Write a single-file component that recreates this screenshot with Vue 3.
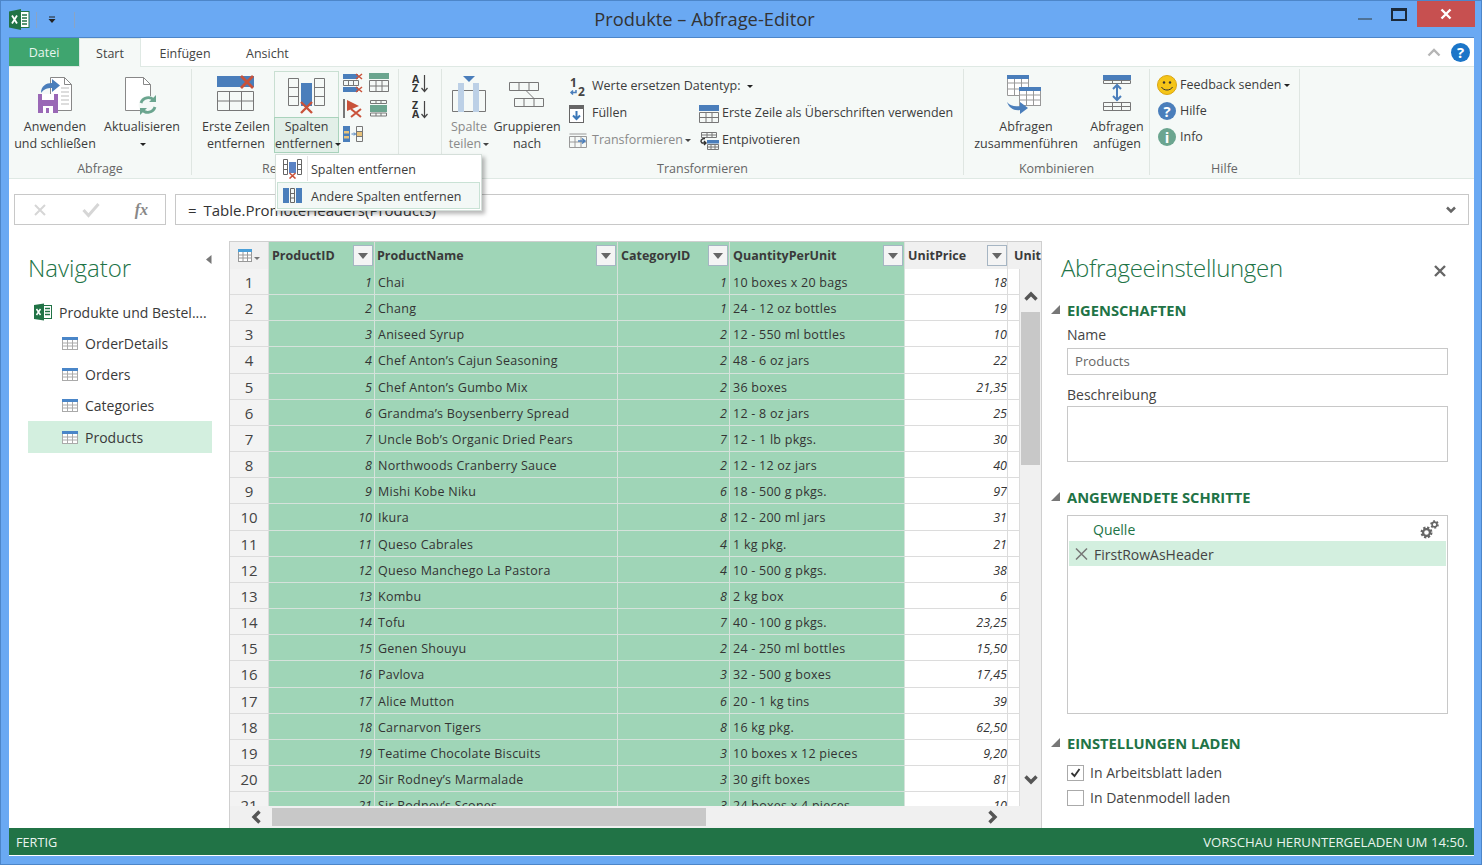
<script setup>
// column layout of the preview grid
const columns = [
  { name: 'ProductID', key: 'id', cls: 'num sel' },
  { name: 'ProductName', key: 'name', cls: 'sel' },
  { name: 'CategoryID', key: 'cat', cls: 'num sel' },
  { name: 'QuantityPerUnit', key: 'qty', cls: 'sel' },
  { name: 'UnitPrice', key: 'price', cls: 'num' },
]

const raw = [
  ['Chai', 1, '10 boxes x 20 bags', '18'],
  ['Chang', 1, '24 - 12 oz bottles', '19'],
  ['Aniseed Syrup', 2, '12 - 550 ml bottles', '10'],
  ['Chef Anton’s Cajun Seasoning', 2, '48 - 6 oz jars', '22'],
  ['Chef Anton’s Gumbo Mix', 2, '36 boxes', '21,35'],
  ['Grandma’s Boysenberry Spread', 2, '12 - 8 oz jars', '25'],
  ['Uncle Bob’s Organic Dried Pears', 7, '12 - 1 lb pkgs.', '30'],
  ['Northwoods Cranberry Sauce', 2, '12 - 12 oz jars', '40'],
  ['Mishi Kobe Niku', 6, '18 - 500 g pkgs.', '97'],
  ['Ikura', 8, '12 - 200 ml jars', '31'],
  ['Queso Cabrales', 4, '1 kg pkg.', '21'],
  ['Queso Manchego La Pastora', 4, '10 - 500 g pkgs.', '38'],
  ['Kombu', 8, '2 kg box', '6'],
  ['Tofu', 7, '40 - 100 g pkgs.', '23,25'],
  ['Genen Shouyu', 2, '24 - 250 ml bottles', '15,50'],
  ['Pavlova', 3, '32 - 500 g boxes', '17,45'],
  ['Alice Mutton', 6, '20 - 1 kg tins', '39'],
  ['Carnarvon Tigers', 8, '16 kg pkg.', '62,50'],
  ['Teatime Chocolate Biscuits', 3, '10 boxes x 12 pieces', '9,20'],
  ['Sir Rodney’s Marmalade', 3, '30 gift boxes', '81'],
  ['Sir Rodney’s Scones', 3, '24 boxes x 4 pieces', '10'],
]
const rows = raw.map((r, i) => ({ id: i + 1, name: r[0], cat: r[1], qty: r[2], price: r[3] }))

const tables = ['OrderDetails', 'Orders', 'Categories', 'Products']
</script>

<template>
  <div class="window">
    <header class="titlebar">
      <div class="qat">
        <svg width="21" height="21" viewBox="0 0 21 21">
          <rect x="10" y="2.5" width="10" height="16" fill="#fff" stroke="#217346" />
          <path d="M13 6h5M13 9h5M13 12h5M13 15h5" stroke="#217346" stroke-width="1.6" />
          <path d="M0 2.500 12 0v21L0 18.500z" fill="#217346" />
          <path d="M3 6.500l5 8M8 6.500l-5 8" stroke="#fff" stroke-width="1.8" />
        </svg>
        <i class="qat-sep"></i>
        <svg class="qat-drop" width="8" height="8" viewBox="0 0 8 8"><path d="M1 1h6" stroke="#222" /><path d="M0.500 3h7L4 7z" fill="#222" /></svg>
        <i class="qat-sep"></i>
      </div>
      <div class="title">Produkte – Abfrage-Editor</div>
      <div class="winbtns">
        <i class="win-min"></i>
        <i class="win-max"></i>
        <div class="win-close">
          <svg width="12" height="12" viewBox="0 0 12 12"><path d="M1.500 1.500l9 9M10.500 1.500l-9 9" stroke="#fff" stroke-width="2.400" /></svg>
        </div>
      </div>
    </header>

    <div class="inner">
      <nav class="tabs">
        <div class="tab file">Datei</div>
        <div class="tab active">Start</div>
        <div class="tab einf">Einfügen</div>
        <div class="tab">Ansicht</div>
        <div class="tabs-right">
          <svg width="14" height="9" viewBox="0 0 14 9"><path d="M1.500 7.500 7 2l5.500 5.500" fill="none" stroke="#b5b5b5" stroke-width="2.400" /></svg>
          <svg width="19" height="19" viewBox="0 0 19 19"><circle cx="9.500" cy="9.500" r="9.500" fill="#1b75c8" /><text x="9.500" y="15" text-anchor="middle" class="glyph" font-size="15" fill="#fff">?</text></svg>
        </div>
      </nav>

      <section class="ribbon">
        <!-- Abfrage -->
        <div class="group g1">
          <div class="group-body">
            <div class="big w82">
              <svg class="big-icon" width="36" height="40" viewBox="0 0 36 40">
                <path d="M13.500 3.500h14l7 7v26h-21z" fill="#fff" stroke="#888" />
                <path d="M27.500 3.500v7h7" fill="none" stroke="#888" />
                <path d="M24 14h8M24 18h8M24 22h8M24 26h8M24 30h8" stroke="#bbb" />
                <path d="M4 19c0-7 5-10 11-10V5l8 6.500-8 6.500v-4c-5 0-8 1-11 5z" fill="#4a7ebb" />
                <rect x="1" y="20" width="20" height="19" fill="#9a68b6" />
                <rect x="5" y="20" width="12" height="6" fill="#fff" />
                <rect x="6" y="32" width="10" height="7" fill="#fff" />
                <rect x="9" y="34" width="3" height="5" fill="#9a68b6" />
              </svg>
              <div>Anwenden<br />und schließen</div>
            </div>
            <div class="big w84">
              <svg class="big-icon" width="36" height="40" viewBox="0 0 36 40">
                <path d="M1.500 3.500h18l7 7v26h-25z" fill="#fff" stroke="#888" />
                <path d="M19.500 3.500v7h7" fill="none" stroke="#888" />
                <circle cx="24" cy="31" r="9.500" fill="#f5f9f7" />
                <path d="M17 29a7.500 7.500 0 0 1 13-2.500M31 33a7.500 7.500 0 0 1-13 2.500" fill="none" stroke="#6ba58f" stroke-width="2.800" />
                <path d="M32 21v7h-7zM16 41v-7h7z" fill="#6ba58f" />
              </svg>
              <div>Aktualisieren<br /><i class="caret"></i></div>
            </div>
          </div>
          <div class="group-label">Abfrage</div>
        </div>

        <!-- Reduzieren -->
        <div class="group g2">
          <div class="group-body">
            <div class="big w76">
              <svg class="big-icon" width="38" height="40" viewBox="0 0 38 40">
                <rect x="0" y="2" width="37" height="11" fill="#4a7ebb" />
                <path d="M.5 17.500h36v19H.5zM12.500 17.500v19M24.500 17.500v19M.5 27h36" fill="none" stroke="#777" />
                <path d="M24 2l12 12M36 2 24 14" stroke="#c9523a" stroke-width="2.800" />
              </svg>
              <div>Erste Zeilen<br />entfernen</div>
            </div>
            <div class="split">
              <div class="split-top">
                <svg width="38" height="37" viewBox="0 0 38 37">
                  <path d="M.5 1.500h10v27H.5zM.5 10.500h10M.5 19.500h10M26.500 1.500h10v27h-10zM26.500 10.500h10M26.500 19.500h10" fill="none" stroke="#777" />
                  <rect x="13" y="6" width="11" height="23" fill="#4a7ebb" />
                  <path d="M13 25l11 11M24 25 13 36" stroke="#c9523a" stroke-width="2.400" />
                </svg>
              </div>
              <div class="split-bottom">Spalten<br />entfernen<i class="caret"></i></div>

              <div class="menu">
                <div class="menu-item">
                  <span class="menu-ico">
                    <svg width="19" height="20" viewBox="0 0 19 20">
                      <path d="M.5.500h4v15h-4zM.5 5.500h4M.5 10.500h4M14.500.500h4v15h-4zM14.500 5.500h4M14.500 10.500h4" fill="none" stroke="#666" />
                      <rect x="6" y="3" width="7" height="11" fill="#5b83c4" />
                      <path d="M6.500 14l6 5.500M12.500 14l-6 5.500" stroke="#c9523a" stroke-width="1.600" />
                    </svg>
                  </span>
                  <span class="menu-text">Spalten entfernen</span>
                </div>
                <div class="menu-item hover">
                  <span class="menu-ico">
                    <svg width="19" height="16" viewBox="0 0 19 16">
                      <rect x="0" y="0" width="6" height="15" fill="#4a7ebb" />
                      <rect x="13" y="0" width="6" height="15" fill="#4a7ebb" />
                      <path d="M7.500.500h4v14h-4zM7.500 5.500h4M7.500 10h4" fill="none" stroke="#666" />
                    </svg>
                  </span>
                  <span class="menu-text">Andere Spalten entfernen</span>
                </div>
              </div>
            </div>
            <div class="small-icons">
              <svg width="20" height="20" viewBox="0 0 20 20">
                <rect x="0" y="1" width="15" height="5" fill="#4a7ebb" />
                <path d="M.5 7.500h15v5H.5zM5.500 7.500v5M10.500 7.500v5" fill="none" stroke="#777" />
                <rect x="0" y="14" width="15" height="5" fill="#4a7ebb" />
                <path d="M13 1l6 5M19 1l-6 5M13 14l6 5M19 14l-6 5" stroke="#c9523a" stroke-width="1.500" />
              </svg>
              <svg width="21" height="20" viewBox="0 0 21 20">
                <rect x="0" y="0" width="20" height="6" fill="#6ba58f" />
                <path d="M.5 7.500h19v11H.5zM7 7.500v11M13 7.500v11M.5 13h19" fill="none" stroke="#777" />
              </svg>
              <svg width="20" height="20" viewBox="0 0 20 20">
                <path d="M1 0v19" stroke="#777" stroke-width="2" />
                <path d="M4 1l12 6-12 5z" fill="#c9523a" />
                <path d="M8 10l10 8M18 10 8 18" stroke="#c9523a" stroke-width="2" />
              </svg>
              <svg width="21" height="18" viewBox="0 0 21 18">
                <path d="M1.500 1.500h16v3h-16zM1.500 14h16v3h-16zM7 1.500v3M12 1.500v3M7 14v3M12 14v3" fill="none" stroke="#777" />
                <rect x="1" y="6" width="17" height="7" fill="#6ba58f" />
              </svg>
              <svg width="20" height="18" viewBox="0 0 20 18">
                <rect x="0" y="1" width="7" height="16" fill="#4a7ebb" />
                <rect x="1" y="6" width="5" height="2.500" fill="#e8c27a" />
                <rect x="1" y="11" width="5" height="2.500" fill="#e8c27a" />
                <path d="M13.500 1.500h6v15h-6zM13.500 6.500h6M13.500 11.500h6" fill="none" stroke="#777" />
                <rect x="14" y="7" width="5" height="4" fill="#e8c27a" />
                <path d="M8.500 9h4M11 7.500 12.500 9 11 10.500" fill="none" stroke="#4a7ebb" />
              </svg>
            </div>
          </div>
          <div class="group-label">Reduzieren</div>
        </div>

        <!-- Sortieren -->
        <div class="group g3">
          <div class="sort">
            <svg width="16" height="19" viewBox="0 0 16 19">
              <text x="0" y="8.500" class="glyph" font-size="10.500" fill="#333">A</text>
              <text x="0" y="18" class="glyph" font-size="10.500" fill="#333">Z</text>
              <path d="M12.500 1v16M9.500 14l3 3.500 3-3.500" fill="none" stroke="#444" stroke-width="1.200" />
            </svg>
            <svg width="16" height="19" viewBox="0 0 16 19">
              <text x="0" y="8.500" class="glyph" font-size="10.500" fill="#333">Z</text>
              <text x="0" y="18" class="glyph" font-size="10.500" fill="#333">A</text>
              <path d="M12.500 1v16M9.500 14l3 3.500 3-3.500" fill="none" stroke="#444" stroke-width="1.200" />
            </svg>
          </div>
        </div>

        <!-- Transformieren -->
        <div class="group g4">
          <div class="group-body">
            <div class="big w38 off">
              <svg class="big-icon" width="38" height="40" viewBox="0 0 38 40">
                <path d="M2.500 16.500h33v21h-33z" fill="none" stroke="#777" />
                <rect x="8" y="9" width="6" height="29" fill="#bcd0e6" />
                <rect x="23" y="9" width="6" height="29" fill="#bcd0e6" />
                <path d="M13 2h12l-6 6z" fill="#4a7ebb" />
              </svg>
              <div>Spalte<br />teilen<i class="caret"></i></div>
            </div>
            <div class="big w66">
              <svg class="big-icon" width="36" height="40" viewBox="0 0 36 40">
                <path d="M.5 8.500h29v8H.5zM10 8.500v8M20 8.500v8M5.500 24.500h29v8h-29zM15 24.500v8M25 24.500v8M17 16.500l8 8" fill="none" stroke="#777" />
              </svg>
              <div>Gruppieren<br />nach</div>
            </div>
            <div class="cmd-grid">
              <div class="cmd span2">
                <svg class="ico-12" width="18" height="20" viewBox="0 0 18 20">
                  <text x="1" y="10" class="glyph" font-size="12" fill="#444">1</text>
                  <text x="9" y="19" class="glyph" font-size="12" fill="#444">2</text>
                  <path d="M7 13v2.500H2M4 13.500l-2 2 2 2" fill="none" stroke="#4a7ebb" stroke-width="1.500" />
                </svg>
                Werte ersetzen Datentyp:<i class="caret after"></i>
              </div>
              <div class="cmd">
                <svg width="18" height="18" viewBox="0 0 18 18">
                  <rect x=".5" y=".5" width="14" height="17" fill="#fff" stroke="#666" />
                  <rect x="0" y="0" width="15" height="4" fill="#666" />
                  <path d="M7.500 6v8M4 10.500l3.500 3.500 3.500-3.500" fill="none" stroke="#3c78b8" stroke-width="2" />
                </svg>
                Füllen
              </div>
              <div class="cmd">
                <svg width="20" height="18" viewBox="0 0 20 18">
                  <rect x="0" y="0" width="20" height="6" fill="#4a7ebb" />
                  <path d="M.5 7.500h19v10H.5zM7 7.500v10M13 7.500v10M.5 12.500h19" fill="none" stroke="#777" />
                </svg>
                Erste Zeile als Überschriften verwenden
              </div>
              <div class="cmd off">
                <svg width="18" height="16" viewBox="0 0 18 16">
                  <path d="M.5 3.500h17v11H.5zM6 3.500v11M12 3.500v11M.5 9h17" fill="none" stroke="#999" />
                  <path d="M.5 1h17" stroke="#999" />
                  <path d="M9 8h6M13 5.500 16 8l-3 2.500" fill="none" stroke="#4a7ebb" stroke-width="1.500" />
                </svg>
                Transformieren<i class="caret"></i>
              </div>
              <div class="cmd">
                <svg width="20" height="18" viewBox="0 0 20 18">
                  <path d="M2.500 .500h15v5h-15zM2.500 3h15M8 .500v5M13 .500v5" fill="none" stroke="#777" />
                  <path d="M8.500 12.500h11v5h-11zM8.500 15h11M12 12.500v5M16 12.500v5" fill="none" stroke="#777" />
                  <rect x="8" y="8" width="12" height="3.500" fill="#4a7ebb" />
                  <path d="M6 6.500C2 6.500 1 9.500 3 11h4M5 9l2 2-2 2" fill="none" stroke="#333" stroke-width="1.400" />
                </svg>
                Entpivotieren
              </div>
            </div>
          </div>
          <div class="group-label">Transformieren</div>
        </div>

        <!-- Kombinieren -->
        <div class="group g5">
          <div class="group-body">
            <div class="big w102">
              <svg class="big-icon" width="40" height="40" viewBox="0 0 40 40">
                <path d="M1.500 2.500h21v19h-21zM8.500 2.500v19M15.500 2.500v19M1.500 9h21M1.500 15h21" fill="#fff" stroke="#999" />
                <rect x="1" y="1" width="22" height="4" fill="#4a7ebb" />
                <rect x="13.500" y="13.500" width="21" height="18" fill="#fff" stroke="#999" />
                <path d="M20.500 13.500v18M27.500 13.500v18M13.500 21h21M13.500 26h21" stroke="#999" />
                <rect x="13" y="13" width="22" height="4" fill="#4a7ebb" />
                <path d="M1 28c3 4 8 5 13 4v-4l8 6-8 6v-4c-6 1-11-2-13-8z" fill="#4a7ebb" />
              </svg>
              <div>Abfragen<br />zusammenführen</div>
            </div>
            <div class="big w54">
              <svg class="big-icon" width="28" height="40" viewBox="0 0 28 40">
                <rect x="0" y="1" width="28" height="5" fill="#4a7ebb" />
                <path d="M.5 6.500h27v3h-27zM9.500 6.500v3M18.500 6.500v3M.5 28.500h27v8h-27zM.5 32.500h27M9.500 28.500v8M18.500 28.500v8" fill="none" stroke="#777" />
                <path d="M14 12v13M10 15l4-4 4 4M10 22l4 4 4-4" fill="none" stroke="#4a7ebb" stroke-width="2" />
              </svg>
              <div>Abfragen<br />anfügen</div>
            </div>
          </div>
          <div class="group-label">Kombinieren</div>
        </div>

        <!-- Hilfe -->
        <div class="group g6">
          <div class="group-body">
            <div class="help-list">
              <div class="cmd">
                <svg width="20" height="20" viewBox="0 0 20 20">
                  <circle cx="10" cy="10" r="9.500" fill="#f5c518" stroke="#d9a514" />
                  <circle cx="7" cy="7.500" r="1.200" fill="#333" />
                  <circle cx="13" cy="7.500" r="1.200" fill="#333" />
                  <path d="M4.500 12c2 4 9 4 11 0" fill="none" stroke="#333" />
                </svg>
                Feedback senden<i class="caret"></i>
              </div>
              <div class="cmd">
                <svg width="20" height="20" viewBox="0 0 20 20"><circle cx="10" cy="10" r="9" fill="#4a7ebb" /><text x="10" y="15.500" text-anchor="middle" class="glyph" font-size="15" fill="#fff">?</text></svg>
                Hilfe
              </div>
              <div class="cmd">
                <svg width="20" height="20" viewBox="0 0 20 20"><circle cx="10" cy="10" r="9" fill="#6ba58f" /><text x="10" y="15.500" text-anchor="middle" class="glyph" font-size="15" fill="#fff">i</text></svg>
                Info
              </div>
            </div>
          </div>
          <div class="group-label">Hilfe</div>
        </div>
      </section>

      <div class="formula-row">
        <div class="formula-btns">
          <svg width="14" height="14" viewBox="0 0 14 14"><path d="M2 2l10 10M12 2 2 12" stroke="#d6d6d6" stroke-width="2" /></svg>
          <svg width="18" height="16" viewBox="0 0 18 16"><path d="M1.500 8l5 5.500L16.500 2" fill="none" stroke="#d6d6d6" stroke-width="3" /></svg>
          <span class="fx">fx</span>
        </div>
        <div class="formula-input">
          <span><span class="eq">=</span> Table.PromoteHeaders(Products)</span>
          <svg width="10" height="8" viewBox="0 0 10 8"><path d="M1 1.500 5 5.500l4-4" fill="none" stroke="#666" stroke-width="2.500" /></svg>
        </div>
      </div>

      <main class="content">
        <aside class="navigator">
          <div class="nav-head">
            <h2 class="pane-title">Navigator</h2>
            <svg width="6" height="9" viewBox="0 0 6 9"><path d="M5.500 0v9L0 4.500z" fill="#777" /></svg>
          </div>
          <div class="nav-source">
            <svg width="18" height="18" viewBox="0 0 18 18">
              <rect x="9" y="2.500" width="8.500" height="13" fill="#fff" stroke="#217346" />
              <path d="M11 5.500h5M11 8.500h5M11 11.500h5" stroke="#217346" stroke-width="1.400" />
              <path d="M0 2 10 .5v17L0 16z" fill="#217346" />
              <path d="M2.500 6l4 6M6.500 6l-4 6" stroke="#fff" stroke-width="1.500" />
            </svg>
            Produkte und Bestel....
          </div>
          <ul class="nav-list">
            <li v-for="t in tables" :key="t" :class="{ current: t === 'Products' }">
              <svg width="16" height="13" viewBox="0 0 16 13">
                <rect x=".5" y=".5" width="15" height="12" fill="#fff" stroke="#aaa" />
                <path d="M5.500 3v9M10.500 3v9M1 6h14M1 9h14" stroke="#aaa" />
                <rect x="0" y="0" width="16" height="3" fill="#4a86c8" />
              </svg>
              {{ t }}
            </li>
          </ul>
        </aside>

        <section class="grid">
          <div class="grid-head">
            <div class="corner">
              <svg width="23" height="13" viewBox="0 0 23 13">
                <rect x=".5" y=".5" width="13" height="12" fill="#fff" stroke="#999" />
                <path d="M5 3v9M9.500 3v9M1 6h12M1 9h12" stroke="#999" />
                <rect x="0" y="0" width="14" height="3" fill="#4a9fd8" />
                <path d="M16 8h6l-3 3z" fill="#777" />
              </svg>
            </div>
            <div v-for="c in columns" :key="c.key" class="head-cell" :class="['c-' + c.key, c.cls]">
              <span>{{ c.name }}</span>
              <button class="filter"><i></i></button>
            </div>
            <div class="head-cell c-unit"><span>Unit</span></div>
          </div>
          <div class="grid-body">
            <div class="grid-rows">
              <div v-for="r in rows" :key="r.id" class="row">
                <div class="rownum">{{ r.id }}</div>
                <div v-for="c in columns" :key="c.key" class="cell" :class="['c-' + c.key, c.cls]">{{ r[c.key] }}</div>
                <div class="cell c-rest"></div>
              </div>
            </div>
            <div class="vscroll">
              <svg width="14" height="10" viewBox="0 0 14 10"><path d="M1.500 8.500 7 3l5.500 5.500" fill="none" stroke="#555" stroke-width="3.400" /></svg>
              <div class="vthumb"></div>
              <svg width="14" height="10" viewBox="0 0 14 10"><path d="M1.500 1.500 7 7l5.500-5.500" fill="none" stroke="#555" stroke-width="3.400" /></svg>
            </div>
          </div>
          <div class="hscroll">
            <svg width="10" height="14" viewBox="0 0 10 14"><path d="M8.500 1.500 3 7l5.500 5.500" fill="none" stroke="#555" stroke-width="3.400" /></svg>
            <div class="hthumb"></div>
            <svg width="10" height="14" viewBox="0 0 10 14"><path d="M1.500 1.500 7 7l-5.500 5.500" fill="none" stroke="#555" stroke-width="3.400" /></svg>
          </div>
        </section>

        <aside class="settings">
          <div class="settings-head">
            <h2 class="pane-title">Abfrageeinstellungen</h2>
            <svg width="12" height="12" viewBox="0 0 12 12"><path d="M1 1l10 10M11 1 1 11" stroke="#666" stroke-width="2.400" /></svg>
          </div>

          <h3 class="sec sec-props"><i class="tri"></i>EIGENSCHAFTEN</h3>
          <label class="lbl">Name</label>
          <div class="field">Products</div>
          <label class="lbl lbl-desc">Beschreibung</label>
          <div class="field area"></div>

          <h3 class="sec sec-steps"><i class="tri"></i>ANGEWENDETE SCHRITTE</h3>
          <div class="steps">
            <div class="step first">
              <span>Quelle</span>
              <svg width="19" height="19" viewBox="0 0 19 19">
                <circle cx="6.500" cy="12.500" r="4.800" fill="none" stroke="#666" stroke-width="2.400" stroke-dasharray="2.200 1.570" />
                <circle cx="6.500" cy="12.500" r="3.400" fill="none" stroke="#666" stroke-width="2.200" />
                <circle cx="14.500" cy="4.500" r="3.400" fill="none" stroke="#666" stroke-width="1.800" stroke-dasharray="1.800 1.760" />
                <circle cx="14.500" cy="4.500" r="2.400" fill="none" stroke="#666" stroke-width="1.600" />
              </svg>
            </div>
            <div class="step current">
              <svg width="13" height="12" viewBox="0 0 13 12"><path d="M1 .5l11 11M12 .5l-11 11" stroke="#777" stroke-width="1.500" /></svg>
              <span>FirstRowAsHeader</span>
            </div>
          </div>

          <h3 class="sec sec-load"><i class="tri"></i>EINSTELLUNGEN LADEN</h3>
          <div class="check">
            <span class="box">
              <svg width="13" height="13" viewBox="0 0 13 13"><path d="M2.500 7l3 3 5-7" fill="none" stroke="#333" stroke-width="1.800" /></svg>
            </span>
            In Arbeitsblatt laden
          </div>
          <div class="check">
            <span class="box"></span>
            In Datenmodell laden
          </div>
        </aside>
      </main>

      <footer class="status">
        <span>FERTIG</span>
        <span class="status-right">VORSCHAU HERUNTERGELADEN UM 14:50.</span>
      </footer>
    </div>
  </div>
</template>

<style>
html, body { margin: 0; padding: 0; }
</style>

<style scoped>
.window {
  box-sizing: border-box;
  width: 1482px;
  height: 865px;
  background: #6aa9f3;
  border: 1px solid #4d86c9;
  padding: 0 7px 8px 8px;
  display: flex;
  flex-direction: column;
  font-family: "Open Sans", "Noto Sans", sans-serif;
  color: #3a3a3a;
  overflow: hidden;
}
.glyph { font-family: "Open Sans", sans-serif; font-weight: 700; }
i { display: block; font-style: normal; }

/* title bar */
.titlebar { height: 36px; flex: none; display: flex; align-items: flex-start; position: relative; }
.qat { display: flex; align-items: center; height: 21px; margin-top: 8px; }
.qat-sep { width: 1px; height: 16px; background: #8aa4c4; margin-left: 6px; }
.qat-drop { margin: 0 12px 0 11px; }
.title { position: absolute; left: 0; right: 74px; top: 5px; text-align: center; font-size: 18.3px; line-height: 26px; color: #333; }
.winbtns { margin-left: auto; display: flex; align-items: flex-start; }
.win-min { width: 14px; height: 2px; background: #4e7297; margin-top: 17px; margin-right: 19px; }
.win-max { width: 12px; height: 8px; border: 2px solid #1c2a3a; border-top-width: 3px; margin-top: 7px; margin-right: 10px; }
.win-close { width: 58px; height: 26px; background: #c75050; display: flex; align-items: center; justify-content: center; margin-right: -1px; }

.inner { flex: 1; min-height: 0; display: flex; flex-direction: column; background: #fff; border-top: 1px solid #4d86c9; border-bottom: 1px solid #fff; }

/* tabs */
.tabs { height: 28px; flex: none; display: flex; align-items: stretch; font-size: 12.5px; position: relative; border-bottom: 1px solid #dfe9e4; }
.tab { padding: 0 18px; line-height: 32px; color: #444; }
.tab.file { width: 70px; box-sizing: border-box; padding: 0; text-align: center; background: #3fa56f; color: #e8f5ee; line-height: 30px; }
.tab.active { width: 62px; box-sizing: border-box; padding: 0; text-align: center; background: #f5f9f7; border: 1px solid #dfe9e4; border-bottom: none; height: 29px; line-height: 30px; }
.tab.einf { width: 86px; box-sizing: border-box; padding: 0; text-align: center; margin-left: 1px; }
.tab:last-of-type { padding: 0; margin-left: 18px; }
.tabs-right { margin-left: auto; display: flex; align-items: center; gap: 10px; padding-right: 4px; }

/* ribbon */
.ribbon { height: 111px; flex: none; display: flex; background: #f5f9f7; border-bottom: 1px solid #dfe9e4; font-size: 12.5px; line-height: 16.5px; color: #3c3c3c; }
.group { box-sizing: border-box; display: flex; flex-direction: column; margin: 2px 0 3px; border-right: 1px solid #dfe6e2; position: relative; }
.g1 { width: 183px; }
.g2 { width: 207px; }
.g3 { width: 43px; }
.g4 { width: 522px; }
.g5 { width: 186px; }
.g6 { width: 150px; }
.group-body { flex: 1; display: flex; align-items: flex-start; padding-top: 2px; min-height: 0; }
.group-label { height: 14px; line-height: 15px; text-align: center; color: #666; flex: none; }
.g1 .group-body { padding-left: 5px; gap: 4px; }
.g2 .group-body { padding-left: 6px; }
.g4 .group-body { padding-left: 8px; gap: 6px; }
.g5 .group-body { padding-left: 11px; gap: 13px; }
.g6 .group-body { padding-left: 7px; }

.big { display: flex; flex-direction: column; align-items: center; text-align: center; white-space: nowrap; }
.big-icon { height: 40px; margin: 3px 0 5px; flex: none; overflow: visible; }
.w82 { width: 82px; }
.w84 { width: 84px; }
.w76 { width: 76px; }
.w38 { width: 38px; }
.w66 { width: 66px; }
.w102 { width: 102px; }
.w54 { width: 54px; }
.off { color: #8a8a8a; }

.caret { display: inline-block; width: 0; height: 0; border: 3px solid transparent; border-top: 3px solid #222; border-bottom: none; vertical-align: middle; margin-left: 2px; }
.caret.after { margin-left: 6px; }
.off .caret { border-top-color: #444; }

.split { position: relative; width: 65px; box-sizing: border-box; text-align: center; white-space: nowrap; }
.split-top { height: 46px; box-sizing: border-box; border: 1px solid #c9dfd2; border-bottom: none; display: flex; justify-content: center; padding-top: 5px; }
.split-bottom { height: 36px; box-sizing: border-box; border: 1px solid #a9d3bc; background: #e2efe8; padding-top: 1px; }

.menu { position: absolute; left: 1px; top: 83px; width: 207px; box-sizing: border-box; background: #fff; border: 1px solid #d5dfda; box-shadow: 3px 3px 4px rgba(0, 0, 0, .28); padding: 0 1px 1px; z-index: 5; text-align: left; }
.menu-item { display: flex; align-items: center; height: 27px; box-sizing: border-box; border: 1px solid transparent; }
.menu-item.hover { background: #f3f8f6; border-color: #c9e2d5; }
.menu-ico { width: 29px; height: 100%; border-right: 1px solid #e4e4e4; margin-right: 3px; display: flex; align-items: center; justify-content: center; flex: none; }
.menu-item.hover .menu-ico { border-right-color: transparent; }
.menu-text { padding-top: 3px; }

.small-icons { display: grid; grid-template-columns: 22px 22px; grid-auto-rows: 26px; column-gap: 4px; margin-left: 4px; padding-top: 2px; }
.sort { display: flex; flex-direction: column; align-items: center; gap: 7px; padding-top: 5px; }

.cmd-grid { display: grid; grid-template-columns: 130px auto; grid-auto-rows: 27px; margin-left: 3px; margin-top: 2px; white-space: nowrap; }
.cmd { display: flex; align-items: center; }
.cmd svg { margin-right: 4px; flex: none; }
.span2 { grid-column: span 2; }
.cmd-grid .cmd svg.ico-12 { margin-right: 5px; }
.cmd-grid .cmd:nth-child(2n + 2) svg { margin-right: 5px; }
.cmd-grid .cmd:nth-child(2n + 3) svg { margin-right: 3px; }
.help-list { display: grid; grid-auto-rows: 26px; margin-top: 1px; white-space: nowrap; }
.help-list .cmd svg { margin-right: 3px; }

/* formula bar */
.formula-row { flex: none; height: 62px; box-sizing: border-box; padding: 15px 5px 16px 5px; display: flex; gap: 9px; }
.formula-btns { box-sizing: border-box; width: 152px; border: 1px solid #c8c8c8; display: flex; align-items: center; justify-content: space-between; padding: 0 17px 0 18px; }
.fx { font-family: "Liberation Serif", serif; font-style: italic; font-weight: 700; font-size: 16px; color: #888; }
.formula-input { flex: 1; box-sizing: border-box; border: 1px solid #c8c8c8; display: flex; align-items: center; justify-content: space-between; padding: 1px 12px 0; font-size: 15px; color: #333; }
.eq { margin-right: 3px; }

/* body */
.content { flex: 1; min-height: 0; display: flex; }
.pane-title { margin: 0; font-weight: 300; font-size: 24px; line-height: 34px; color: #217346; white-space: nowrap; }
.settings .pane-title { letter-spacing: -.3px; }

.navigator { width: 220px; flex: none; box-sizing: border-box; padding: 10px 17px 0 19px; font-size: 14px; }
.nav-head { display: flex; align-items: flex-start; justify-content: space-between; }
.nav-head svg { margin-top: 4px; }
.nav-source { display: flex; align-items: center; gap: 7px; margin: 16px 0 0 6px; height: 22px; white-space: nowrap; color: #3a3a3a; }
.nav-list { list-style: none; margin: 4.500px 0 0; padding: 0; }
.nav-list li { display: flex; align-items: center; height: 31.3px; padding-left: 34px; gap: 7px; }
.nav-list li.current { background: #d3efdf; }

/* grid */
.grid { width: 813px; flex: none; box-sizing: border-box; border: 1px solid #cfcfcf; border-width: 1px 1px 0 1px; display: flex; flex-direction: column; font-size: 12.5px; color: #333; overflow: hidden; }
.grid-head { height: 27px; flex: none; display: flex; background: #f0f0f0; font-weight: 700; }
.corner { width: 39px; flex: none; display: flex; align-items: center; justify-content: center; box-sizing: border-box; border-right: 1px solid #dcdcdc; }
.head-cell { box-sizing: border-box; flex: none; display: flex; align-items: center; justify-content: space-between; padding: 0 1px 0 3px; border-right: 1px solid #dcdcdc; white-space: nowrap; overflow: hidden; color: #3a3a3a; }
.head-cell.sel { background: #9fd5b7; }
.head-cell.c-name { padding-left: 2px; }
.head-cell.c-price { padding-right: 0; }
.filter { box-sizing: border-box; width: 20px; height: 21px; background: #f4f4f4; border: 1px solid #a6b5c3; padding: 0; display: flex; align-items: center; justify-content: center; }
.filter i { width: 0; height: 0; border: 5px solid transparent; border-top: 6px solid #666; border-bottom: none; }

.c-id { width: 106px; }
.c-name { width: 243px; }
.c-cat { width: 112px; }
.c-qty { width: 175px; }
.c-price { width: 103px; }
.c-unit { width: 33px; border-right: none; padding: 0 0 0 6px; }
.c-rest { width: 12px; }

.grid-body { flex: 1; min-height: 0; display: flex; }
.grid-rows { width: 790px; flex: none; overflow: hidden; }
.vscroll { flex: 1; background: #f0f0f0; display: flex; flex-direction: column; align-items: center; padding-top: 22px; padding-bottom: 21px; }
.vthumb { width: 19px; height: 153px; background: #c8c8c8; margin: 11px 0 auto; }

.row { display: flex; height: 26.16px; }
.rownum { width: 39px; flex: none; box-sizing: border-box; text-align: center; background: #f3f3f3; border-right: 1px solid #dcdcdc; border-bottom: 1px solid #dcdcdc; font-size: 15px; line-height: 26px; color: #444; }
.cell { box-sizing: border-box; flex: none; padding: 0 2px 0 3px; line-height: 27px; background: #fff; border-right: 1px solid #dcdcdc; border-bottom: 1px solid #dcdcdc; white-space: nowrap; overflow: hidden; letter-spacing: .25px; }
.cell.sel { background: #9fd5b7; border-color: #d5e2db; }
.cell.num { text-align: right; font-style: italic; letter-spacing: 0; }
.cell.c-price { padding-right: 0; }

.hscroll { height: 22px; flex: none; background: #f0f0f0; display: flex; align-items: center; padding-left: 21px; padding-right: 43px; }
.hthumb { width: 434px; height: 18px; background: #c8c8c8; margin: 0 auto 0 11px; }

/* settings */
.settings { flex: 1; min-width: 0; box-sizing: border-box; padding: 10px 26px 0 25px; font-size: 14px; color: #444; }
.settings-head { display: flex; align-items: flex-start; justify-content: space-between; margin: 0 -1px 0 -6px; padding-right: 3px; }
.settings-head svg { margin-top: 14px; }
.sec { position: relative; margin: 0; font-weight: 700; font-size: 14.7px; line-height: 20px; color: #217346; white-space: nowrap; }
.sec-props { margin-top: 15px; }
.sec-steps { margin-top: 25px; }
.sec-load { margin-top: 19px; }
.tri { position: absolute; left: -16px; top: 5px; width: 0; height: 0; border-style: solid; border-width: 0 0 9px 9px; border-color: transparent transparent #777 transparent; }
.lbl { display: block; line-height: 20px; margin-top: 5px; }
.lbl-desc { margin-top: 10px; }
.field { box-sizing: border-box; height: 27px; border: 1px solid #c8c8c8; padding: 0 7px; line-height: 25px; font-size: 13.2px; color: #666; margin-top: 3px; }
.field.area { height: 56px; margin-top: 1px; }
.steps { box-sizing: border-box; height: 199px; border: 1px solid #c8c8c8; padding: 1px; margin-top: 8px; }
.step { height: 25px; display: flex; align-items: center; }
.step.first { height: 24px; color: #217346; justify-content: space-between; padding: 0 7px 0 24px; }
.step.current { background: #d3efdf; padding-left: 6px; gap: 6px; color: #444; }
.step.current span { padding-top: 1px; }
.check { display: flex; align-items: center; gap: 6px; height: 25px; }
.sec-load + .check { margin-top: 7px; }
.box { box-sizing: border-box; width: 17px; height: 16px; border: 1px solid #aaa; display: flex; align-items: center; justify-content: center; background: #fff; }

/* status bar */
.status { height: 27px; flex: none; box-sizing: border-box; background: #217346; color: #e9f3ee; display: flex; justify-content: space-between; align-items: center; padding: 1px 6px 0 7px; font-size: 12.7px; }
.status-right { font-size: 13.2px; }
</style>
